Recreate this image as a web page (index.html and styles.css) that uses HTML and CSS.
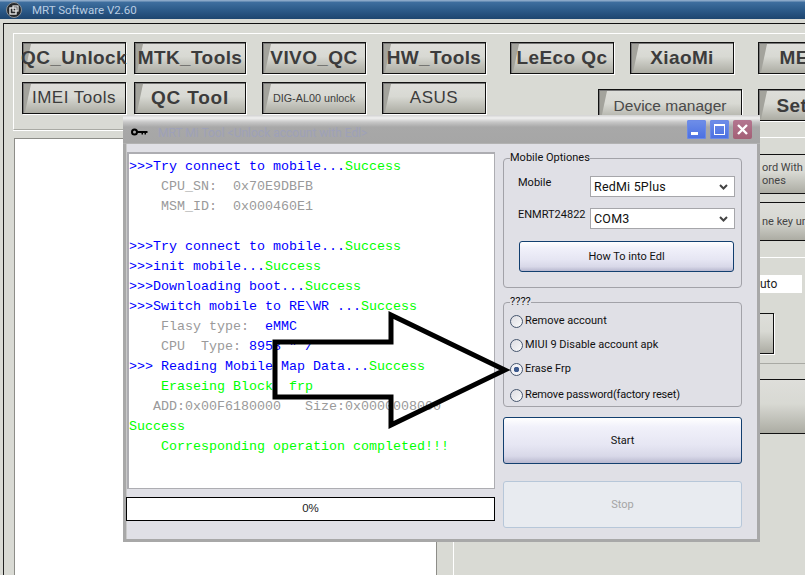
FILE: index.html
```html
<!DOCTYPE html>
<html lang="en">
<head>
<meta charset="utf-8">
<title>MRT Software V2.60</title>
<link rel="stylesheet" href="styles.css">
</head>
<body>
<div class="app">
  <header class="titlebar">
    <svg class="app-icon" width="16" height="16" viewBox="0 0 16 16"><circle cx="8" cy="8" r="7.5" fill="#26282a"/><circle cx="8" cy="8" r="7.5" fill="none" stroke="#8b9299"/><rect x="4" y="6" width="6" height="6" fill="none" stroke="#e8e8e8" stroke-width="1.4"/><rect x="7" y="4" width="5" height="5" fill="none" stroke="#e8e8e8" stroke-width="1.2"/></svg>
    <span class="app-title">MRT Software V2.60</span>
  </header>
  <main class="frame">
    <section class="toolbar">
      <div class="tool-row">
        <button class="tool tool-b w104"><span>QC_Unlock</span></button>
        <button class="tool tool-b w112 ml8"><span>MTK_Tools</span></button>
        <button class="tool tool-b w104 ml16"><span>VIVO_QC</span></button>
        <button class="tool tool-b w104 ml16"><span>HW_Tools</span></button>
        <button class="tool tool-b w104 ml24"><span>LeEco Qc</span></button>
        <button class="tool tool-b w104 ml16"><span>XiaoMi</span></button>
        <button class="tool tool-b w104 ml24"><span>MEIZU</span></button>
      </div>
      <div class="tool-row">
        <button class="tool tool-m w104"><span>IMEI Tools</span></button>
        <button class="tool tool-b tool-wide w112 ml8"><span>QC Tool</span></button>
        <button class="tool tool-s w104 ml16"><span>DIG-AL00 unlock</span></button>
        <button class="tool tool-m w104 ml16"><span>ASUS</span></button>
        <button class="tool tool-d w144 ml112 low"><span>Device manager</span></button>
        <button class="tool tool-b w104 ml16 low"><span>Setting</span></button>
      </div>
    </section>
    <div class="lower">
      <div class="left-col">
        <div class="toolbar-foot"></div>
        <div class="big-white"></div>
      </div>
      <aside class="side">
        <div class="side-band"></div>
        <div class="side-btn sb1"><span>ord With B<br>ones</span></div>
        <div class="side-btn sb2"><span>ne key un</span></div>
        <div class="side-rule"></div>
        <div class="side-input">uto</div>
        <div class="side-btn sb3"></div>
        <div class="side-rule2"></div>
        <div class="side-btn sb4"></div>
      </aside>
    </div>
  </main>

  <section class="dialog">
    <header class="dlg-title">
      <svg class="key" width="17" height="8" viewBox="0 0 17 8"><circle cx="3.5" cy="4" r="2.5" fill="none" stroke="#000" stroke-width="2"/><path d="M6 3h10.5v2H15v1.5h-1.5V5H12v1.5h-1.5V5H6z" fill="#000"/></svg>
      <span class="dlg-name">MRT Mi Tool &lt;Unlock account with Edl&gt;</span>
      <div class="win-btns">
        <div class="win-btn win-blue"><svg width="19" height="19" viewBox="0 0 19 19"><rect x="4" y="12" width="7" height="3" fill="#fff"/></svg></div>
        <div class="win-btn win-blue"><svg width="19" height="19" viewBox="0 0 19 19"><rect x="4.5" y="4.5" width="10" height="10" fill="none" stroke="#fff"/><rect x="4" y="4" width="11" height="2" fill="#fff"/></svg></div>
        <div class="win-btn win-red"><svg width="19" height="19" viewBox="0 0 19 19"><path d="M5 5l9 9M14 5l-9 9" stroke="#fff" stroke-width="2.4"/></svg></div>
      </div>
    </header>
    <div class="dlg-body">
      <div class="dlg-left">
        <div class="log">
          <div><b>&gt;&gt;&gt;Try connect to mobile...</b><i>Success</i></div>
          <div><u>    CPU_SN:  0x70E9DBFB</u></div>
          <div><u>    MSM_ID:  0x000460E1</u></div>
          <div> </div>
          <div><b>&gt;&gt;&gt;Try connect to mobile...</b><i>Success</i></div>
          <div><b>&gt;&gt;&gt;init mobile...</b><i>Success</i></div>
          <div><b>&gt;&gt;&gt;Downloading boot...</b><i>Success</i></div>
          <div><b>&gt;&gt;&gt;Switch mobile to RE\WR ...</b><i>Success</i></div>
          <div><u>    Flasy type:  </u><b>eMMC</b></div>
          <div><u>    CPU  Type: </u><b>8953 " /</b></div>
          <div><b>&gt;&gt;&gt; Reading Mobile Map Data...</b><i>Success</i></div>
          <div><i>    Eraseing Block  frp</i></div>
          <div><u>   ADD:0x00F6180000   Size:0x0000008000</u></div>
          <div><i>Success</i></div>
          <div><i>    Corresponding operation completed!!!</i></div>
        </div>
        <div class="progress">0%</div>
      </div>
      <div class="dlg-right">
        <fieldset class="group g1">
          <legend>Mobile Optiones</legend>
          <div class="field f1">
            <label>Mobile</label>
            <div class="combo"><span>RedMi 5Plus</span><svg width="9" height="6" viewBox="0 0 9 6"><path d="M1 1l3.500 3.500L8 1" fill="none" stroke="#444" stroke-width="2"/></svg></div>
          </div>
          <div class="field f2">
            <label>ENMRT24822</label>
            <div class="combo"><span>COM3</span><svg width="9" height="6" viewBox="0 0 9 6"><path d="M1 1l3.500 3.500L8 1" fill="none" stroke="#444" stroke-width="2"/></svg></div>
          </div>
          <button class="aero edl">How To into Edl</button>
        </fieldset>
        <fieldset class="group g2">
          <legend>????</legend>
          <div class="radio r1"><span class="dot"></span>Remove account</div>
          <div class="radio r2"><span class="dot"></span>MIUI 9 Disable account apk</div>
          <div class="radio r3"><span class="dot on"></span>Erase Frp</div>
          <div class="radio r4"><span class="dot"></span>Remove password(factory reset)</div>
        </fieldset>
        <button class="aero start">Start</button>
        <button class="stop">Stop</button>
      </div>
    </div>
  </section>

  <svg class="arrow" width="240" height="120" viewBox="0 0 240 120"><path d="M119 5V32H3V87H119V115L233 60Z" fill="none" stroke="#000" stroke-width="5" stroke-linejoin="miter"/></svg>
</div>
</body>
</html>
```
FILE: styles.css
```css
* { box-sizing: border-box; }
html, body { margin: 0; padding: 0; }
body { background: #d9dad4; font-family: "Liberation Sans", Arial, sans-serif; }
.app { position: relative; width: 805px; height: 575px; overflow: hidden; background: #d9dad4; display: flex; flex-direction: column; }

.titlebar { height: 19px; flex: none; display: flex; align-items: center; padding-left: 6px; gap: 10px;
  background: linear-gradient(#8aa8c8 0, #8aa8c8 1px, #3f6f9f 2px, #2e5d8c 9px, #1d456f 19px); }
.app-title { color: #b9cde2; font-family: Roboto, sans-serif; font-size: 11.5px; }
.app-icon { flex: none; }

.frame { flex: 1; margin: 4px 0 0 3px; border-top: 1px solid #111; border-left: 1px solid #222; padding: 9px 0 0 9px; display: flex; flex-direction: column; min-height: 0; }

.toolbar { height: 88px; flex: none; border-top: 1px solid #fff; border-left: 1px solid #fff; padding: 8px 0 0 8px; display: flex; flex-direction: column; gap: 8px; }
.tool-row { display: flex; height: 32px; flex: none; }

.tool { position: relative; flex: none; height: 32px; padding: 0; border: 1px solid #111; outline: 0; color: #3c3c3c; white-space: nowrap; overflow: visible;
  display: flex; align-items: center; justify-content: center; font-family: "Liberation Sans", Arial, sans-serif;
  background: linear-gradient(#dededa 0, #d8d9d3 45%, #acaca3 100%); box-shadow: 1px 1px 0 #fff, inset 1px 1px 0 #777; }
.tool::before { content: ""; position: absolute; left: 1px; top: 1px; bottom: 1px; width: 7px; background: #a3a39c; clip-path: polygon(0 0, 100% 0, 15% 100%, 0 100%); }
.tool span { position: relative; }
.tool-b { font-size: 19px; font-weight: 700; letter-spacing: .4px; }
.tool-wide { letter-spacing: .8px; }
.tool-m { font-size: 17px; letter-spacing: .5px; }
.tool-s { font-size: 10.8px; }
.tool-d { font-size: 15.500px; color: #4a4a4a; }
.low { margin-top: 7px; padding-top: 2px; }
.w104 { width: 104px; }
.w112 { width: 112px; }
.w144 { width: 144px; }
.ml8 { margin-left: 8px; }
.ml16 { margin-left: 16px; }
.ml24 { margin-left: 24px; }
.ml112 { margin-left: 112px; }

.lower { flex: 1; display: flex; min-height: 0; }
.left-col { width: 424px; flex: none; display: flex; flex-direction: column; }
.toolbar-foot { height: 9px; flex: none; border-left: 1px solid #fff; border-bottom: 1px solid #a9aaa4; box-shadow: 0 1px 0 #fff; width: 100%; }
.big-white { flex: 1; margin: 8px 0 0 1px; background: #fff; border-top: 1px solid #8d8d88; border-left: 1px solid #8d8d88; border-right: 1px solid #8d8d88; }

.side { flex: 1; margin-left: 16px; border-left: 1px solid #fff; display: flex; flex-direction: column; min-width: 0; }
.side-band { height: 17px; flex: none; border-top: 1px solid #a9aaa4; border-bottom: 1px solid #fff; }
.side-btn { flex: none; border: 1px solid #111; border-right: 0; display: flex; align-items: center; padding-left: 307px; color: #444; font-family: Roboto, sans-serif; font-size: 11px; line-height: 13px; white-space: nowrap; overflow: hidden;
  background: linear-gradient(#dededa 0, #d8d9d3 45%, #acaca3 100%); }
.sb1 { height: 40px; margin-top: 16px; }
.sb2 { height: 39px; margin-top: 8px; }
.side-rule { height: 1px; flex: none; margin-top: 16px; background: #fff; }
.side-input { height: 18px; flex: none; margin: 17px 3px 0 0; background: #fff; padding-left: 306px; color: #222; font-family: Roboto, sans-serif; font-size: 12px; line-height: 18px; }
.sb3 { height: 41px; margin-top: 20px; width: 320px; border-right: 1px solid #111; box-shadow: 1px 1px 0 #fff; }
.side-rule2 { height: 1px; flex: none; margin-top: 9px; background: #a9aaa4; }
.sb4 { height: 55px; margin-top: 15px; }

.dialog { position: absolute; left: 123px; top: 115px; width: 637px; height: 427px; background: #e0e0e6; border: 3px solid #a8a8a8; border-top: 0; box-shadow: inset 1px 0 0 #c9c9c9; display: flex; flex-direction: column; }
.dlg-title { height: 29px; flex: none; margin: 0 -3px; padding: 12px 9px 0 8px; display: flex; align-items: flex-start; position: relative;
  background: linear-gradient(#d2d2d2 0, #f0f0f0 3px, #c8c8c8 7px, #a8a8a8 12px, #a6a6a6 100%); border-bottom: 1px solid #b2b2b2; }
.key { flex: none; margin-right: 10px; margin-top: 1px; }
.dlg-name { color: #9ea1b8; font-family: Roboto, sans-serif; font-size: 12px; line-height: 12px; }
.win-btns { position: absolute; top: 5px; right: 8px; display: flex; gap: 4px; }
.win-btn { width: 19px; height: 19px; border-radius: 2px; display: block; }
.win-btn svg { display: block; }
.win-blue { background: linear-gradient(#6f8fe8, #4a6fe2); box-shadow: inset 0 0 0 1px #6b89e6; }
.win-red { background: linear-gradient(#b37690, #a35f75); }

.dlg-body { flex: 1; display: flex; min-height: 0; }
.dlg-left { width: 369px; flex: none; padding: 8px 0 0 0; display: flex; flex-direction: column; }
.log { height: 337px; flex: none; margin-left: 1px; background: #fff; border: 2px solid #adadb2; border-right-width: 1px; border-bottom-width: 1px; padding: 3px 0 0 0; font-family: "Liberation Mono", "Courier New", monospace; font-size: 13.33px; line-height: 20px; overflow: hidden; }
.log div { height: 20px; white-space: pre; }
.log b { font-weight: 400; color: #0000ff; }
.log i { font-style: normal; color: #00ff00; }
.log u { text-decoration: none; color: #9a9a9a; }
.progress { height: 24px; flex: none; margin-top: 8px; background: #fff; border: 1px solid #000; text-align: center; font-size: 11.500px; line-height: 21px; color: #222; }

.dlg-right { flex: none; width: 239px; margin-left: 8px; padding-top: 7px; display: flex; flex-direction: column; font-family: Roboto, sans-serif; font-size: 11px; color: #111; }
.group { margin: 0; padding: 0; border: 1px solid #a2a2a8; border-radius: 4px; position: relative; flex: none; min-width: 0; }
.group legend { margin-left: 6px; padding: 0; font-size: 11px; line-height: 14px; }
.g1 { height: 137px; }
.g2 { height: 112px; margin-top: 7px; }
.field { position: relative; display: flex; align-items: flex-start; padding-left: 14px; }
.f1 { margin-top: 11px; }
.f2 { margin-top: 11px; }
.field label { width: 72px; flex: none; line-height: 14px; }
.combo { width: 145px; height: 21px; flex: none; background: #fff; border: 1px solid #a6a6aa; display: flex; align-items: center; justify-content: space-between; padding: 0 6px 0 3px; font-size: 12.5px; letter-spacing: .2px; }
.aero { border: 1px solid #123f6f; border-radius: 3px; padding: 0; color: #111; font-family: Roboto, sans-serif; font-size: 11px; display: block;
  background: linear-gradient(#ffffff 0, #f1f1fa 20%, #e6e6f3 60%, #d8d8e8 85%, #b8b8cf 100%); }
.edl { width: 215px; height: 31px; margin: 12px 0 0 15px; }
.radio { position: relative; display: flex; align-items: center; gap: 2px; padding-left: 6px; height: 14px; line-height: 14px; }
.r1 { margin-top: 5px; }
.r2 { margin-top: 10px; }
.r3 { margin-top: 10px; }
.r4 { margin-top: 12px; letter-spacing: -.15px; }
.dot { width: 13px; height: 13px; flex: none; border-radius: 50%; border: 1px solid #46566e; background: linear-gradient(135deg, #dcdce2, #fafafa); }
.dot.on { background: radial-gradient(circle, #3d5a8e 0, #3d5a8e 2.500px, #f2f2f6 3px); }
.start { width: 239px; height: 47px; margin-top: 10px; flex: none; }
.stop { width: 239px; height: 47px; margin-top: 17px; flex: none; background: #e8ebf0; border: 1px solid #b7c7d9; border-radius: 3px; padding: 0; color: #a5a5a5; font-family: Roboto, sans-serif; font-size: 11px; }

.arrow { position: absolute; left: 272px; top: 310px; }
```
